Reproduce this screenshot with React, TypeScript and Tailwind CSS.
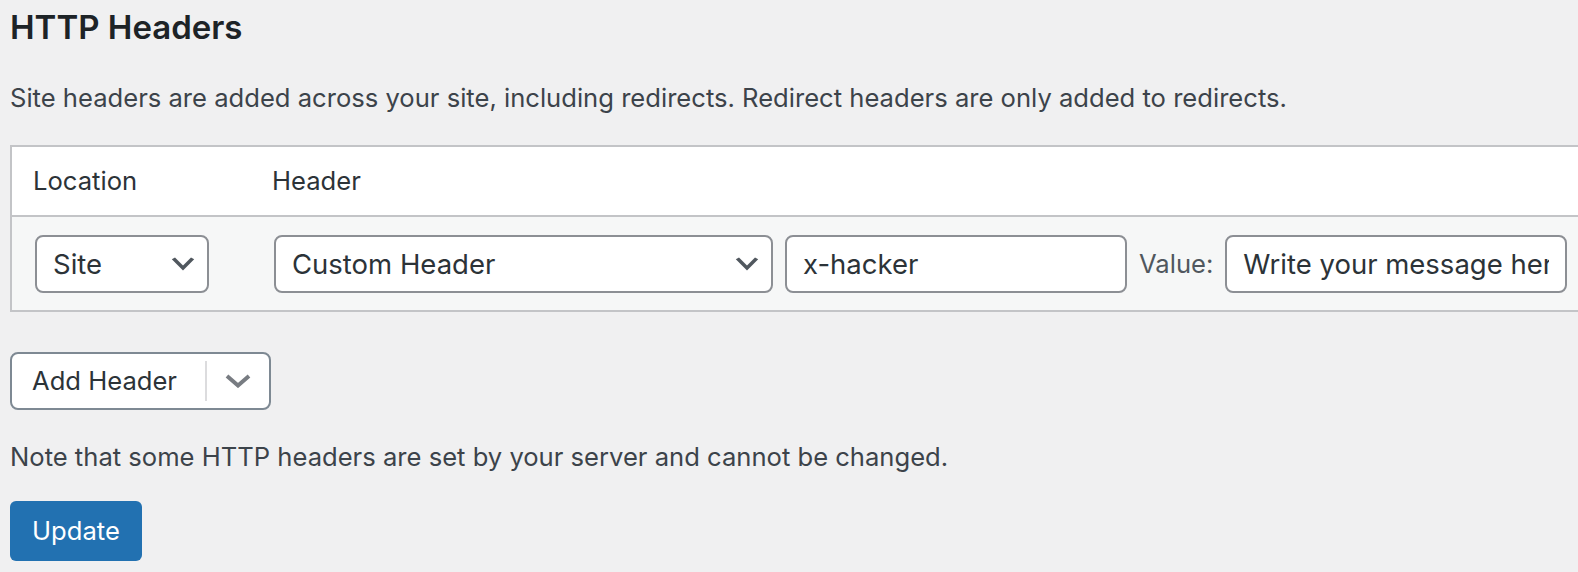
import React from "react";

function Chevron() {
  return (
    <svg width="32" height="32" viewBox="0 0 20 20" className="shrink-0">
      <path d="M5 6l5 5 5-5 2 1-7 7-7-7 2-1z" fill="#50575e" />
    </svg>
  );
}

function FakeSelect({ label, width }: { label: string; width: string }) {
  return (
    <div
      className={`${width} flex h-[58px] items-center justify-between rounded-[8px] border-2 border-[#8c8f94] bg-white pl-[16px] pr-[8px] text-[27.5px] text-[#2c3338]`}
    >
      <span>{label}</span>
      <Chevron />
    </div>
  );
}

function TextBox({ value }: { value: string }) {
  return (
    <div className="flex h-[58px] w-[342px] shrink-0 items-center rounded-[8px] border-2 border-[#8c8f94] bg-white px-[16px] text-[27.5px] text-[#2c3338]">
      <span className="block w-full overflow-hidden whitespace-nowrap">{value}</span>
    </div>
  );
}

export default function App() {
  return (
    <div
      className="min-h-screen w-full overflow-hidden bg-[#f0f0f1] pl-[10px] text-[25.6px] leading-[40px] text-[#3c434a]"
      style={{ fontFamily: "Inter, 'Liberation Sans', sans-serif" }}
    >
      <h2 className="mt-[5px] text-[33px] font-semibold leading-[44px] text-[#1d2327]">HTTP Headers</h2>

      <p className="mt-[29px]">
        Site headers are added across your site, including redirects. Redirect headers are only added to redirects.
      </p>

      <div className="mt-[27px] w-[1620px] border-2 border-[#c3c4c7]">
        <div className="flex bg-white py-[14px] text-[#2c3338]">
          <div className="w-[260px] pl-[21px]">Location</div>
          <div>Header</div>
        </div>
        <div className="flex items-center gap-[12px] border-t-2 border-[#c3c4c7] bg-[#f6f7f7] pb-[17px] pl-[23px] pt-[18px]">
          <FakeSelect label="Site" width="w-[174px]" />
          <div className="ml-[53px]">
            <FakeSelect label="Custom Header" width="w-[499px]" />
          </div>
          <TextBox value="x-hacker" />
          <span className="text-[#50575e]">Value:</span>
          <TextBox value="Write your message here" />
        </div>
      </div>

      <div className="mt-[40px] flex h-[58px] w-[261px] items-center rounded-[8px] border-2 border-[#7e8993] bg-white">
        <span className="pl-[20px] text-[#2c3338]">Add Header</span>
        <div className="ml-auto h-[40px] w-[2px] bg-[#dcdcde]" />
        <div className="flex w-[62px] justify-center">
          <svg width="26" height="14" viewBox="0 0 26 14">
            <path d="M2 2 L13 11.5 L24 2" fill="none" stroke="#787c82" strokeWidth="4" />
          </svg>
        </div>
      </div>

      <p className="mt-[27px]">Note that some HTTP headers are set by your server and cannot be changed.</p>

      <button
        type="button"
        className="mt-[24px] h-[60px] rounded-[6px] bg-[#2271b1] px-[22px] text-white"
      >
        Update
      </button>
    </div>
  );
}
